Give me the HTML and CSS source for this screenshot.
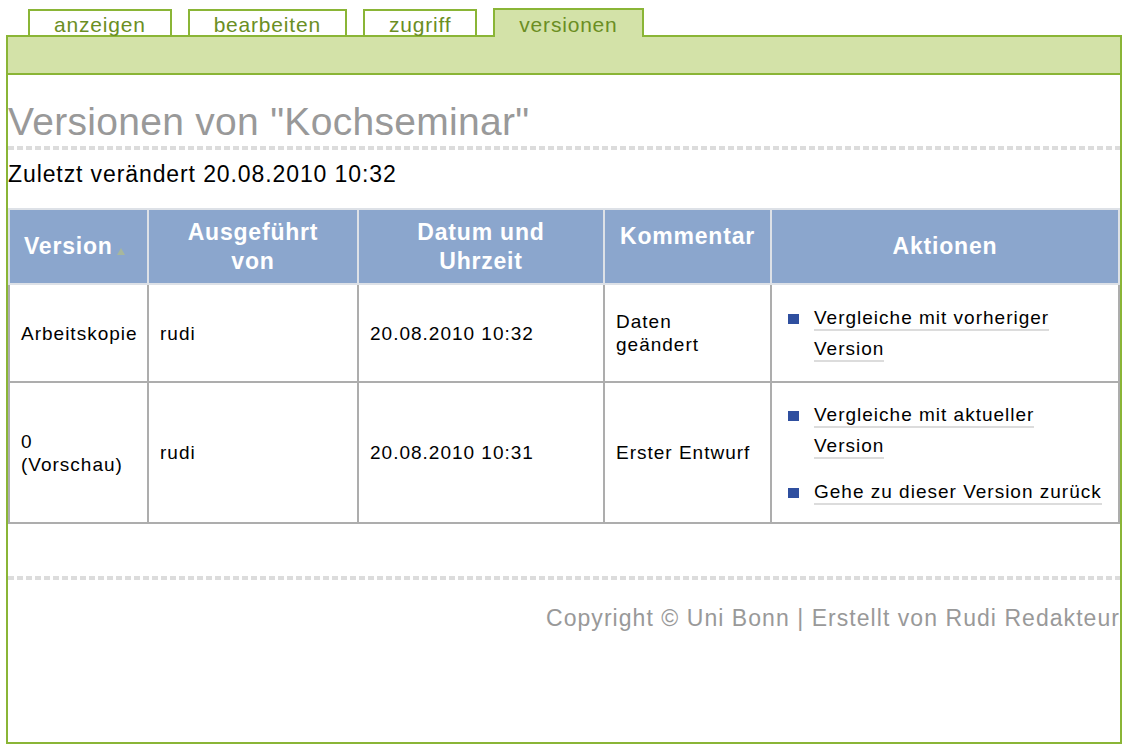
FILE: index.html
```html
<!DOCTYPE html>
<html lang="de">
<head>
<meta charset="utf-8">
<title>Versionen von "Kochseminar"</title>
<link rel="stylesheet" href="styles.css">
</head>
<body>
<div class="page">
  <nav class="tabs">
    <a class="tab" href="#">anzeigen</a>
    <a class="tab" href="#">bearbeiten</a>
    <a class="tab" href="#">zugriff</a>
    <a class="tab active" href="#">versionen</a>
  </nav>
  <div class="frame">
    <div class="band"></div>
    <main class="content">
      <h1 class="title">Versionen von "Kochseminar"</h1>
      <div class="rule"></div>
      <p class="modified">Zuletzt verändert 20.08.2010 10:32</p>
      <table class="versions">
        <colgroup>
          <col class="c1"><col class="c2"><col class="c3"><col class="c4"><col class="c5">
        </colgroup>
        <thead>
          <tr>
            <th class="th-version">Version<span class="sort"></span></th>
            <th>Ausgeführt<br>von</th>
            <th>Datum und<br>Uhrzeit</th>
            <th class="th-comment">Kommentar</th>
            <th>Aktionen</th>
          </tr>
        </thead>
        <tbody>
          <tr class="row1">
            <td>Arbeitskopie</td>
            <td>rudi</td>
            <td>20.08.2010 10:32</td>
            <td>Daten<br>geändert</td>
            <td class="td-actions">
              <ul class="actions">
                <li><span class="lbl"><a href="#">Vergleiche mit vorheriger Version</a></span></li>
              </ul>
            </td>
          </tr>
          <tr class="row2">
            <td>0<br>(Vorschau)</td>
            <td>rudi</td>
            <td>20.08.2010 10:31</td>
            <td>Erster Entwurf</td>
            <td class="td-actions">
              <ul class="actions">
                <li><span class="lbl"><a href="#">Vergleiche mit aktueller Version</a></span></li>
                <li><span class="lbl"><a href="#">Gehe zu dieser Version zurück</a></span></li>
              </ul>
            </td>
          </tr>
        </tbody>
      </table>
    </main>
    <footer class="footer">
      <div class="rule"></div>
      <p class="copyright">Copyright © Uni Bonn | Erstellt von Rudi Redakteur</p>
    </footer>
  </div>
</div>
</body>
</html>
```
FILE: styles.css
```css
html, body {
  margin: 0;
  padding: 0;
  background: #fff;
}
body {
  font-family: "Liberation Sans", Arial, sans-serif;
  color: #000;
}
.page {
  padding: 8px 0 0 6px;
}
.tabs {
  display: flex;
  align-items: flex-end;
  gap: 16px;
  height: 27px;
  padding-left: 22px;
}
.tab {
  box-sizing: border-box;
  height: 26px;
  border: 2px solid #8ab536;
  border-bottom: 0;
  padding: 1px 24px 0;
  background: #fff;
  color: #6b8e23;
  font-size: 21px;
  letter-spacing: 0.8px;
  line-height: 25px;
  text-decoration: none;
}
.tab.active {
  height: 29px;
  margin-bottom: -2px;
  padding-top: 2px;
  background: #d3e2a8;
  position: relative;
  z-index: 1;
}
.frame {
  box-sizing: border-box;
  width: 1116px;
  height: 709px;
  border: 2px solid #8ab536;
  display: flex;
  flex-direction: column;
}
.band {
  height: 36px;
  background: #d3e2a8;
  border-bottom: 2px solid #8ab536;
}
.title {
  margin: 24px 0 0;
  font-size: 39px;
  font-weight: normal;
  line-height: 45px;
  letter-spacing: 0.3px;
  color: #999;
}
.rule {
  height: 4px;
  margin-top: 2px;
  background: repeating-linear-gradient(to right, #dcdcdc 0 6px, transparent 6px 9px);
}
.modified {
  margin: 11px 0 0;
  font-size: 23px;
  line-height: 26px;
  letter-spacing: 0.9px;
}
.versions {
  margin-top: 21px;
  width: 100%;
  table-layout: fixed;
  border-collapse: collapse;
}
.c1 { width: 139px; }
.c2 { width: 210px; }
.c3 { width: 246px; }
.c4 { width: 167px; }
.c5 { width: 348px; }
.versions th {
  height: 61px;
  padding: 0 8px;
  border: 2px solid #dde1e7;
  background: #8ba6cd;
  color: #fff;
  font-size: 23px;
  font-weight: bold;
  line-height: 29px;
  letter-spacing: 0.8px;
  text-align: center;
  vertical-align: middle;
}
.versions th.th-version {
  text-align: left;
  padding-left: 14px;
}
.versions th.th-comment {
  vertical-align: top;
  padding-top: 12px;
}
.sort {
  display: inline-block;
  width: 0;
  height: 0;
  margin-left: 4px;
  border-left: 4px solid transparent;
  border-right: 4px solid transparent;
  border-bottom: 7px solid #a7b79c;
  vertical-align: -1px;
}
.versions td {
  padding: 0 11px;
  border: 2px solid #adadad;
  font-size: 19px;
  line-height: 23px;
  letter-spacing: 1px;
  vertical-align: middle;
}
.versions td.td-actions {
  padding-right: 12px;
}
.row1 td { height: 96px; }
.row2 td { height: 139px; }
.actions {
  list-style: none;
  margin: 0;
  padding: 0 0 0 5px;
}
.actions li {
  display: flex;
  line-height: 31px;
}
.actions li + li {
  margin-top: 15px;
}
.actions li::before {
  content: "";
  flex: none;
  width: 11px;
  height: 10px;
  margin: 12px 15px 0 0;
  background: #2f4f9f;
}
.actions a {
  color: #000;
  text-decoration: none;
  border-bottom: 2px solid #dcdcdc;
  padding-bottom: 1px;
}
.footer {
  margin-top: 52px;
}
.footer .rule {
  margin-top: 0;
}
.copyright {
  margin: 25px 0 0;
  font-size: 23px;
  line-height: 26px;
  letter-spacing: 1.05px;
  color: #999;
  text-align: right;
}
```
